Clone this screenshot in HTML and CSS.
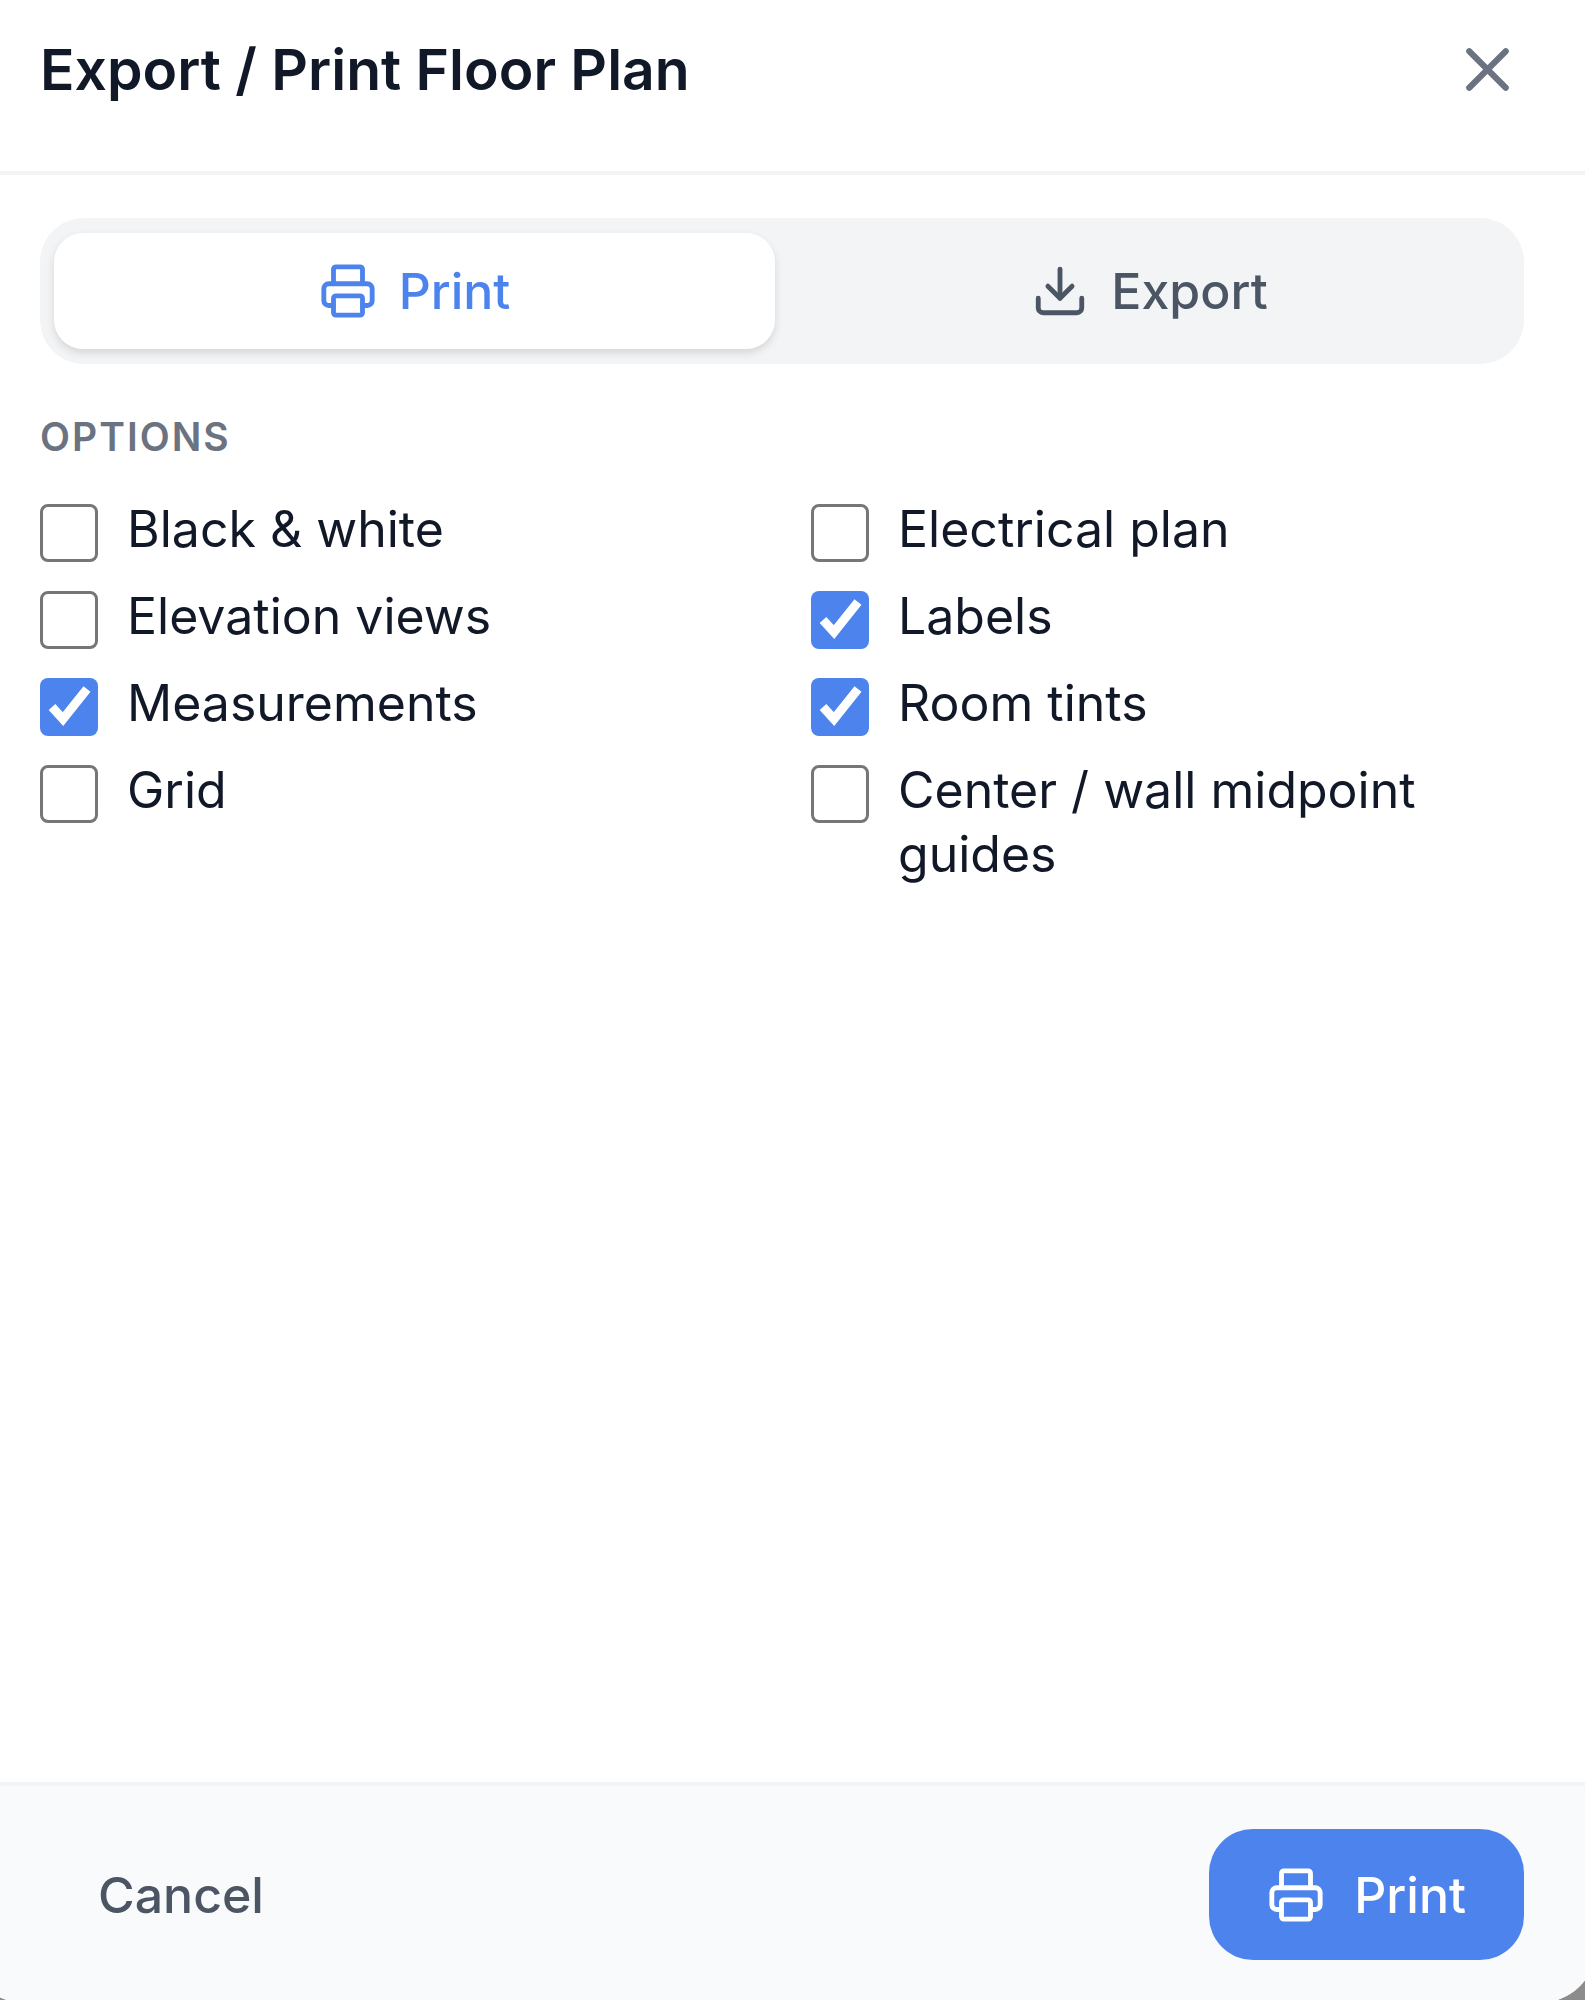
FILE: index.html
```
<!DOCTYPE html>
<html lang="en">
<head>
    <meta charset="UTF-8">
    <meta name="viewport" content="width=device-width, initial-scale=1.0">
    <title>Export / Print Floor Plan</title>
    <link rel="stylesheet" href="styles.css">
</head>
<body>
    <div class="modal" role="dialog" aria-labelledby="modalTitle">
        <header class="modal-header">
            <h1 id="modalTitle">Export / Print Floor Plan</h1>
            <button type="button" class="close-btn" aria-label="Close">
                <svg class="icon" viewBox="0 0 24 24"><path d="M18 6 6 18"/><path d="m6 6 12 12"/></svg>
            </button>
        </header>

        <main class="modal-body">
            <div class="tabs" role="tablist">
                <button type="button" class="tab active" role="tab" aria-selected="true">
                    <svg class="icon" viewBox="0 0 24 24">
                        <path d="M6 18H4a2 2 0 0 1-2-2v-5a2 2 0 0 1 2-2h16a2 2 0 0 1 2 2v5a2 2 0 0 1-2 2h-2"/>
                        <path d="M6 9V3a1 1 0 0 1 1-1h10a1 1 0 0 1 1 1v6"/>
                        <rect x="6" y="14" width="12" height="8" rx="1"/>
                    </svg>
                    Print
                </button>
                <button type="button" class="tab" role="tab" aria-selected="false">
                    <svg class="icon" viewBox="0 0 24 24">
                        <path d="M21 15v4a2 2 0 0 1-2 2H5a2 2 0 0 1-2-2v-4"/>
                        <path d="m7 10 5 5 5-5"/>
                        <path d="M12 15V3"/>
                    </svg>
                    Export
                </button>
            </div>

            <h2 class="section-title">Options</h2>
            <div class="options">
                <label class="option"><input type="checkbox"><span>Black &amp; white</span></label>
                <label class="option"><input type="checkbox"><span>Electrical plan</span></label>
                <label class="option"><input type="checkbox"><span>Elevation views</span></label>
                <label class="option"><input type="checkbox" checked><span>Labels</span></label>
                <label class="option"><input type="checkbox" checked><span>Measurements</span></label>
                <label class="option"><input type="checkbox" checked><span>Room tints</span></label>
                <label class="option"><input type="checkbox"><span>Grid</span></label>
                <label class="option"><input type="checkbox"><span>Center / wall midpoint guides</span></label>
            </div>
        </main>

        <footer class="modal-footer">
            <button type="button" class="btn btn-cancel">Cancel</button>
            <button type="button" class="btn btn-primary">
                <svg class="icon" viewBox="0 0 24 24">
                    <path d="M6 18H4a2 2 0 0 1-2-2v-5a2 2 0 0 1 2-2h16a2 2 0 0 1 2 2v5a2 2 0 0 1-2 2h-2"/>
                    <path d="M6 9V3a1 1 0 0 1 1-1h10a1 1 0 0 1 1 1v6"/>
                    <rect x="6" y="14" width="12" height="8" rx="1"/>
                </svg>
                Print
            </button>
        </footer>
    </div>
</body>
</html>
```
FILE: styles.css
```
* {
    box-sizing: border-box;
}

body {
    margin: 0;
    height: 100vh;
    overflow: hidden;
    background: #8c8c8c;
    color: #111827;
    font-family: Inter, "Liberation Sans", sans-serif;
    font-size: 50px;
    line-height: 64px;
}

button {
    border: none;
    background: none;
    padding: 0;
    font: inherit;
    font-weight: 500;
    color: #4b5563;
    cursor: pointer;
}

.icon {
    width: 58px;
    height: 58px;
    flex-shrink: 0;
    fill: none;
    stroke: currentColor;
    stroke-width: 2;
    stroke-linecap: round;
    stroke-linejoin: round;
}

/* The dialog is a little larger than the window */
.modal {
    display: flex;
    flex-direction: column;
    min-height: calc(100vh + 3px);
    margin: 0 -12px 0 -33px;
    background: #fff;
    border-radius: 0 0 58px 58px;
    overflow: hidden;
}

/* Header */
.modal-header {
    display: flex;
    justify-content: space-between;
    align-items: center;
    padding: 26px 73px 58px;
    border-bottom: 4px solid #f3f4f6;
}
.modal-header h1 {
    margin: 0;
    font-size: 57px;
    line-height: 87px;
    font-weight: 600;
}
.close-btn {
    display: flex;
    color: #6b7280;
}
.close-btn .icon {
    width: 73px;
    height: 73px;
}

.modal-body {
    flex: 1;
    padding: 43px 73px;
}

/* Print / Export switch */
.tabs {
    display: grid;
    grid-template-columns: 1fr 1fr;
    gap: 14px;
    padding: 15px 14px;
    margin-bottom: 44px;
    background: #f3f4f6;
    border-radius: 44px;
}
.tab {
    display: flex;
    justify-content: center;
    align-items: center;
    gap: 22px;
    padding: 26px;
    border-radius: 29px;
}
.tab.active {
    background: #fff;
    color: #4d83ed;
    box-shadow: 0 4px 8px rgba(0, 0, 0, 0.12);
}

/* Options */
.section-title {
    margin: 0 0 31px;
    font-size: 39px;
    line-height: 58px;
    font-weight: 600;
    letter-spacing: 2px;
    text-transform: uppercase;
    color: #6b7280;
}
.options {
    display: grid;
    grid-template-columns: 1fr 1fr;
    gap: 22px 58px;
}
.option {
    display: flex;
    align-items: flex-start;
    gap: 29px;
    cursor: pointer;
}
.option input {
    appearance: none;
    flex-shrink: 0;
    width: 58px;
    height: 58px;
    margin: 7px 0 0;
    border: 3px solid #767676;
    border-radius: 8px;
    background: #fff;
}
.option input:checked {
    border: none;
    background: #4d83ed url("data:image/svg+xml,%3Csvg xmlns='http://www.w3.org/2000/svg' viewBox='0 0 58 58'%3E%3Cpath d='M12 29 23 41 47 11' fill='none' stroke='white' stroke-width='9'/%3E%3C/svg%3E") center / contain no-repeat;
}

/* Footer */
.modal-footer {
    display: flex;
    justify-content: space-between;
    padding: 43px 73px;
    background: #f9fafc;
    border-top: 4px solid #f3f4f6;
}
.btn {
    display: flex;
    align-items: center;
    gap: 29px;
    padding: 34px 58px 33px;
    border-radius: 44px;
}
.btn-primary {
    background: #4d83ed;
    color: #fff;
}
```
